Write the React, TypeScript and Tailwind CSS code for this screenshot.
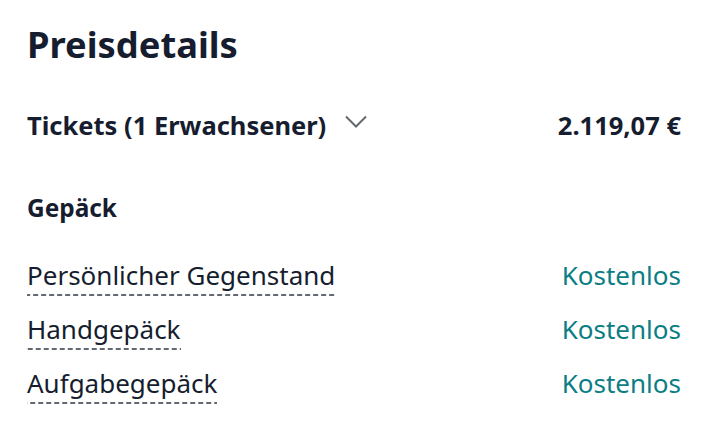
import React from "react";

const items = ["Persönlicher Gegenstand", "Handgepäck", "Aufgabegepäck"];

const App: React.FC = () => {
  return (
    <div
      className="w-[712px] h-[424px] bg-white text-[#161d2f] px-[27px] pt-[22px]"
      style={{ fontFamily: '"Noto Sans", sans-serif' }}
    >
      <h1 className="text-[36.3px] font-bold leading-[44px]">Preisdetails</h1>

      {/* Tickets */}
      <div className="mt-[42px] flex items-center justify-between pr-[4px]">
        <div className="flex items-center gap-[19px]">
          <span className="text-[25.5px] font-bold leading-[34px]">Tickets (1 Erwachsener)</span>
          <svg width="22" height="13" viewBox="0 0 22 13" fill="none" className="mb-[7px]">
            <path d="M1 1.5l10 10 10-10" stroke="#626971" strokeWidth="2" />
          </svg>
        </div>
        <span className="text-[25.5px] font-bold leading-[34px]">2.119,07 €</span>
      </div>

      {/* Gepäck */}
      <h2 className="mt-[50px] text-[24.4px] font-bold leading-[32px]">Gepäck</h2>

      <ul className="mt-[34px] flex flex-col gap-[16px] pr-[4px]">
        {items.map(item => (
          <li key={item} className="flex justify-between items-start">
            <span className="text-[26px] leading-[34px] pb-[4px] bg-[linear-gradient(to_right,#626971_62%,transparent_0)] bg-[length:8px_2px] bg-repeat-x bg-bottom">
              {item}
            </span>
            <span className="text-[26px] leading-[34px] text-[#0a7d85]">Kostenlos</span>
          </li>
        ))}
      </ul>
    </div>
  );
};

export default App;
